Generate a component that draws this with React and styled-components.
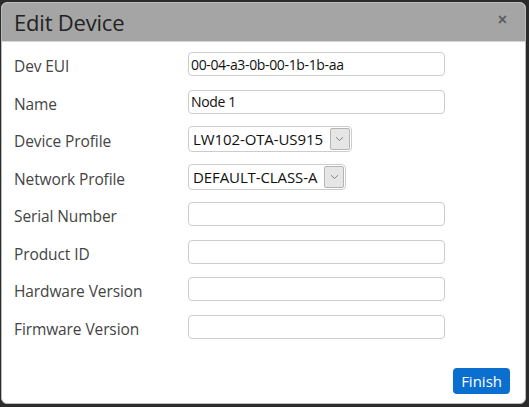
import React from "react";
import styled, { createGlobalStyle } from "styled-components";

const GlobalStyle = createGlobalStyle`
  html, body {
    margin: 0;
    padding: 0;
    background: #2b2b2b;
  }
  body {
    font-family: "Open Sans", "Noto Sans", "Liberation Sans", sans-serif;
  }
`;

const Page = styled.div`
  width: 529px;
  height: 407px;
  padding: 2px 3px 3px 1px;
  box-sizing: border-box;
`;

const Dialog = styled.div`
  width: 100%;
  height: 100%;
  background: #fff;
  border: 1px solid #bdbdbd;
  border-radius: 6px;
  box-sizing: border-box;
  overflow: hidden;
  display: flex;
  flex-direction: column;
`;

const Header = styled.div`
  height: 39px;
  background: #a5a5a5;
  border-bottom: 1px solid #d6d6d6;
  display: flex;
  align-items: center;
  justify-content: space-between;
  padding: 0 18px 0 12px;
  box-sizing: border-box;
`;

const Title = styled.h1`
  margin: 0;
  font-size: 22px;
  font-weight: 400;
  color: #222;
  letter-spacing: -0.2px;
`;

const Close = styled.button`
  border: none;
  background: none;
  padding: 0;
  margin-top: -5px;
  font-size: 16px;
  font-weight: 700;
  line-height: 1;
  color: #5e5e5e;
  cursor: pointer;
  font-family: "Liberation Sans", sans-serif;
`;

const Body = styled.div`
  flex: 1;
  display: flex;
  flex-direction: column;
  padding: 10px 16px 9px 12px;
`;

const Form = styled.div`
  display: grid;
  grid-template-columns: 174px 257px;
  grid-auto-rows: 24px;
  row-gap: 13.5px;
  align-items: center;
`;

const Label = styled.label`
  font-size: 15.5px;
  color: #444;
  padding-top: 4px;
  letter-spacing: -0.1px;
`;

const Input = styled.input`
  height: 24px;
  width: 257px;
  box-sizing: border-box;
  border: 1px solid #cccccc;
  border-radius: 4px;
  padding: 0 2px;
  font-family: "Open Sans", "Noto Sans", sans-serif;
  font-size: 14px;
  color: #111;
  letter-spacing: -0.35px;
  outline: none;
`;

const Select = styled.div`
  display: flex;
  align-items: stretch;
  width: max-content;
  height: 26px;
  border: 1px solid #cccccc;
  border-radius: 4px;
  box-sizing: border-box;
  overflow: hidden;
  background: #fff;
`;

const SelectValue = styled.span`
  display: flex;
  align-items: center;
  padding: 0 7px 0 4px;
  font-size: 15px;
  color: #111;
  letter-spacing: -0.1px;
`;

const Arrow = styled.span`
  width: 18px;
  margin: 1px 1px 1px 0;
  display: flex;
  align-items: center;
  justify-content: center;
  background: #e6e6e6;
  border: 1px solid #b4b4b4;
  border-radius: 2px;
`;

const Footer = styled.div`
  margin-top: auto;
  display: flex;
  justify-content: flex-end;
`;

const FinishButton = styled.button`
  background: #0b6fd0;
  color: #fff;
  border: none;
  border-radius: 4px;
  height: 26px;
  padding: 0 8px;
  font-family: "Open Sans", "Noto Sans", sans-serif;
  font-size: 15px;
  cursor: pointer;
  margin-right: -1px;
`;

const Chevron = () => (
  <svg width="9" height="6" viewBox="0 0 9 6">
    <path d="M1 1.2 L4.5 4.5 L8 1.2" fill="none" stroke="#777" strokeWidth="0.9" />
  </svg>
);

const fields = [
  { label: "Dev EUI", value: "00-04-a3-0b-00-1b-1b-aa" },
  { label: "Name", value: "Node 1" },
  { label: "Device Profile", select: "LW102-OTA-US915" },
  { label: "Network Profile", select: "DEFAULT-CLASS-A" },
  { label: "Serial Number", value: "" },
  { label: "Product ID", value: "" },
  { label: "Hardware Version", value: "" },
  { label: "Firmware Version", value: "" },
];

const App = () => {
  return (
    <Page>
      <GlobalStyle />
      <Dialog>
        <Header>
          <Title>Edit Device</Title>
          <Close>×</Close>
        </Header>
        <Body>
          <Form>
            {fields.map((f) => (
              <React.Fragment key={f.label}>
                <Label>{f.label}</Label>
                {f.select ? (
                  <Select>
                    <SelectValue>{f.select}</SelectValue>
                    <Arrow>
                      <Chevron />
                    </Arrow>
                  </Select>
                ) : (
                  <Input type="text" defaultValue={f.value} />
                )}
              </React.Fragment>
            ))}
          </Form>
          <Footer>
            <FinishButton>Finish</FinishButton>
          </Footer>
        </Body>
      </Dialog>
    </Page>
  );
};

export default App;
